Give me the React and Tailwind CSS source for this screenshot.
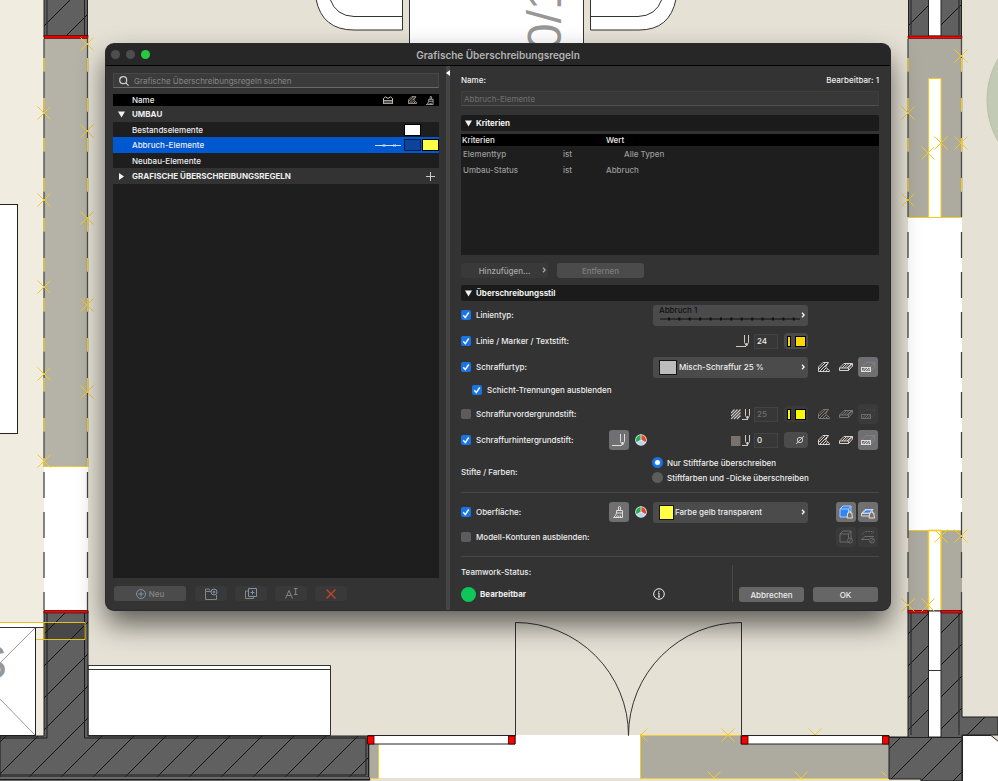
import React, { useState } from "react";

/* ---------- floor plan behind the dialog ---------- */

function Cross({ x, y }) {
  return (
    <path
      d={`M${x - 6.5} ${y - 6.5}L${x + 6.5} ${y + 6.5}M${x - 6.5} ${y + 6.5}L${x + 6.5} ${y - 6.5}`}
      stroke="#f2cb22"
      strokeWidth="1"
      fill="none"
    />
  );
}

function DemolitionEdge({ x, from, to }) {
  return (
    <g fill="none">
      <path d={`M${x} ${from}V${to}`} stroke="#4a4b48" strokeWidth="1.3" />
      <path d={`M${x} 58V${to}`} stroke="#b5b3a8" strokeWidth="1.6" strokeDasharray="14 26" />
      <path d={`M${x} 58V${to}`} stroke="#f0cb2a" strokeWidth="1.2" strokeDasharray="13 27" />
    </g>
  );
}

const crosses = [
  [44, 113], [44, 200], [44, 287], [44, 374], [44, 461],
  [87, 44], [87, 131], [87, 218], [87, 305], [87, 392],
  [961, 56], [961, 143], [941, 143], [928, 153], [908, 113], [908, 200],
  [941, 536], [961, 536], [908, 605], [928, 605],
];

function FloorPlan() {
  return (
    <svg
      className="absolute inset-0 h-full w-full"
      viewBox="0 0 998 781"
      preserveAspectRatio="xMidYMid slice"
      aria-hidden="true"
    >
      <defs>
        <pattern id="hatch" width="32" height="32" patternUnits="userSpaceOnUse" patternTransform="translate(6 0)">
          <rect width="32" height="32" fill="#606060" />
          <path d="M-1 33L33 -1" stroke="#161616" strokeWidth="1" />
        </pattern>
        <clipPath id="bottomEdge">
          <rect x="640" y="728" width="246" height="50" />
        </clipPath>
      </defs>
      <rect width="998" height="781" fill="#e5e1d5" />
      <rect width="44" height="781" fill="#f0ece0" />
      <circle cx="1069" cy="100" r="82" fill="#c2c9b5" stroke="#b7c0a8" />

      {/* furniture */}
      <rect x="-2" y="204.500" width="19.500" height="229" fill="#fff" stroke="#222" />
      <g fill="#fff" stroke="#333">
        <path d="M316 -1Q322 30 354 30H402.500V-1Z" />
        <path d="M330 -1Q336 16 354 16.500H402.500" fill="none" />
        <path d="M676 -1Q670 30 639 30H590.500V-1Z" />
        <path d="M662 -1Q656 16 638 16.500H590.500" fill="none" />
        <path d="M409.500 -1V70H583.500V-1Z" />
        <path d="M88 665.500H330.500V735.500H88ZM88 669.500H330.500" />
      </g>
      <text transform="translate(561 50) rotate(-90)" fontFamily="Liberation Sans, sans-serif" fontSize="48" fill="#979797">
        0/1
      </text>

      {/* left wall */}
      <rect x="44" y="0" width="44" height="36" fill="url(#hatch)" />
      <path d="M44 0V37M47 0V35M84.500 0V35M87.500 0V37" stroke="#222" />
      <rect x="44" y="38" width="44" height="429" fill="#b5b3a8" />
      <rect x="44" y="35.500" width="44" height="3" fill="#e60000" stroke="#400" strokeWidth="0.6" />
      <DemolitionEdge x={44} from={39} to={467} />
      <DemolitionEdge x={87.5} from={39} to={467} />
      <rect x="44" y="467" width="44" height="144" fill="#fff" />
      <path d="M44 472V610M87.500 472V610" stroke="#444" strokeWidth="1.3" strokeDasharray="26 14" />
      <path d="M44 466.500H88" stroke="#f0cb2a" />

      {/* lower left room */}
      <rect x="-1" y="623" width="45" height="5" fill="#fff" />
      <path d="M-1 627.500H35.500V735.500H-1Z" fill="#fff" stroke="#222" />
      <path d="M35 628L-1 664M-1 698L35 735" stroke="#999" />
      <text x="-25" y="679" fontFamily="Liberation Sans, sans-serif" fontSize="48" fill="#979797">S</text>
      <path d="M44 611H88V736H368.500V777H0V736H44Z" fill="url(#hatch)" stroke="#1c1c1c" />
      <path d="M47 611V738H0M84.500 611V738H366V775H0" fill="none" stroke="#1c1c1c" />
      <rect x="0" y="777" width="370" height="4" fill="#6a6a6a" />
      <path d="M0 779.500H370V737" stroke="#1c1c1c" fill="none" />
      <rect x="44" y="610.500" width="44" height="2.500" fill="#f00" stroke="#400" strokeWidth="0.6" />
      <rect x="44" y="623" width="41" height="16" fill="#000" opacity="0.25" />
      <path d="M0 622.500H85V639.500H36M44 622V639" fill="none" stroke="#e4c01f" />
      <path d="M0 627.500H44" stroke="#333" />

      {/* openings along the lower wall */}
      <rect x="370" y="744" width="8" height="34" fill="#adab9f" />
      <rect x="378" y="735" width="262" height="43" fill="#fff" />
      <rect x="640" y="735" width="249" height="43" fill="#adab9f" />
      <path d="M378.500 744V778.500M370 778.500H378M640.500 778V735.500H741M640 778.500H889" stroke="#f0cb2a" fill="none" />
      <g clipPath="url(#bottomEdge)">
        <Cross x={641} y={735} />
        <Cross x={728} y={735} />
        <Cross x={714} y={778} />
        <Cross x={801} y={778} />
        <Cross x={888} y={778} />
        <Cross x={815} y={735} />
      </g>
      <path d="M368 735.500H515V744H368ZM741 735.500H889V744H741Z" fill="#fff" stroke="#222" />
      <path d="M367.500 736H374V744H367.500ZM508.500 736H515V744H508.500ZM741.500 736H748V744H741.500ZM882.500 736H889V744H882.500Z" fill="#f00" stroke="#300" strokeWidth="0.8" />
      <path d="M515.500 736V622.500A113 113 0 0 1 628.500 735.500A113 113 0 0 1 741.500 622.500V736" fill="none" stroke="#333" />

      {/* right wall */}
      <path d="M908 0H962V36H908Z" fill="url(#hatch)" />
      <rect x="908" y="38" width="54" height="180" fill="#adab9f" />
      <rect x="908" y="218" width="54" height="312" fill="#fff" />
      <rect x="908" y="530" width="54" height="81" fill="#adab9f" />
      <path d="M928.500 217V78.500H941V217M908 217.500H962M908 530.500H962" fill="#fff" stroke="#f2cb22" />
      <path d="M928.500 611V530.500H941V611" fill="#fff" stroke="#f2cb22" strokeWidth="1.4" />
      <DemolitionEdge x={908} from={39} to={217} />
      <DemolitionEdge x={961.5} from={39} to={217} />
      <path d="M908 232V611M961.500 232V611" stroke="#444" strokeWidth="1.3" strokeDasharray="26 14" />
      <path d="M908 611H962V717H998V735H962V781H921V779H889V737H908Z" fill="url(#hatch)" stroke="#1c1c1c" />
      <path d="M911 612V735M959 612V735M911 0V35M959 0V35M908.500 0V36M961.500 0V36M889 737.500H962" stroke="#222" />
      <rect x="928.500" y="-1" width="12.500" height="37" fill="#fff" stroke="#222" />
      <rect x="928.500" y="611" width="12.500" height="126" fill="#fff" stroke="#222" />
      <path d="M928.500 670.500H941" stroke="#333" />
      <path d="M908 36H962V38.500H908ZM908 610.500H928V613H908ZM941 610.500H962V613H941Z" fill="#f00" stroke="#400" strokeWidth="0.6" />
      <path d="M962.500 735.500H991L999 742V782H962.500Z" fill="#fff" stroke="#222" />
      {crosses.map(([x, y]) => (
        <Cross key={`${x}-${y}`} x={x} y={y} />
      ))}
    </svg>
  );
}

/* ---------- icons ---------- */

const line = { fill: "none", stroke: "currentColor", strokeWidth: 1 };

function PenIcon() {
  return (
    <svg className="h-3 w-4 shrink-0" viewBox="0 0 16 12" {...line}>
      <path d="M1 11.500H11M9.500 0V7.500L11.500 11L13.500 7.500V0" />
      <path d="M11.500 8V11" strokeWidth="1.4" />
    </svg>
  );
}

function HatchPenIcon() {
  return (
    <svg className="h-3 w-5 shrink-0" viewBox="0 0 20 12" {...line}>
      <path d="M0 5L3.500 1.500M0 8L6.500 1.500M0 11L9.500 1.500M3 11L9.500 4.500M6 11L9.500 7.500" strokeWidth="1.1" />
      <path d="M11 11.500H17M14.500 1V7.500L16.500 11L18.500 7.500V1M16.500 8V11" />
    </svg>
  );
}

function FillPenIcon() {
  return (
    <svg className="h-3 w-5 shrink-0" viewBox="0 0 20 12" {...line}>
      <rect x="0" y="2" width="9.500" height="10" fill="#79716c" stroke="none" />
      <path d="M11 11.500H17M14.500 1V7.500L16.500 11L18.500 7.500V1M16.500 8V11" />
    </svg>
  );
}

function CutFillIcon({ className = "h-[10px] w-3 shrink-0" }) {
  return (
    <svg className={className} viewBox="0 0 12 10" {...line}>
      <path d="M.5 9.500V5L5 .5H10.500L7.500 5L11.500 8.500V9.500Z" />
      <path d="M1 7L7 1M1.500 9.500L9.500 1.500M4.500 9.500L8 6M7.500 9.500L9.500 7.500" />
    </svg>
  );
}

function CoverFillIcon() {
  return (
    <svg className="h-[10px] w-[14px] shrink-0" viewBox="0 0 14 10" {...line}>
      <path d="M.5 6L5 1.500H13.500L9.500 6ZM.5 6V8.500H9.500V6M9.500 8.500L13.500 4V1.500" />
      <path d="M3 6L7 2M5.500 6L9.500 2M8 6L12 2" />
    </svg>
  );
}

function SectionFillIcon() {
  return (
    <svg className="h-[10px] w-[14px] shrink-0" viewBox="0 0 14 10" {...line}>
      <path d="M.5 5L5 .5H13.500L9.500 5M10 9L13.500 5V.5" opacity="0.15" />
      <path d="M0 5.500H10M0 9.500H10M.5 5V10M9.500 5V10M1 9.500L4.500 6M3.500 9.500L7 6M6 9.500L9.500 6" />
    </svg>
  );
}

function BrushIcon({ className = "h-3 w-3" }) {
  return (
    <svg className={className} viewBox="0 0 12 12" {...line}>
      <path d="M5.500 4V1Q6.500 0 7.500 1V4M3.500 4.500H9.500V7H3.500Z" />
      <path d="M3.500 7Q3 10 .5 11.500H9.500V7M3 11.500L4.500 9.500M5.500 11.500L6 9.500M7.500 11.500V9.500" />
    </svg>
  );
}

function SkylineIcon() {
  return (
    <svg className="h-2 w-[10px]" viewBox="0 0 10 8" {...line}>
      <path d="M.5 4V2.500L2.500 .8L5 2.500L7.500 .8L9.500 2.500V4" />
      <path d="M0 4.500H10M0 7.500H10M.5 4V7.500M9.500 4V7.500M0 6H10" strokeWidth="0.8" />
    </svg>
  );
}

function Wheel() {
  return (
    <svg className="h-3 w-3 shrink-0" viewBox="0 0 12 12">
      <circle cx="6" cy="6" r="5.800" fill="#e9eef2" />
      <path d="M6 6V1A5 5 0 0 1 10.300 8.500Z" fill="#e8452c" />
      <path d="M6 6L10.300 8.500A5 5 0 0 1 1.700 8.500Z" fill="#b9d5f4" />
      <path d="M6 6L1.700 8.500A5 5 0 0 1 6 1Z" fill="#1fae55" />
      <path d="M6 6V.5M6 6L10.800 8.800M6 6L1.200 8.800" stroke="#fff" strokeWidth="0.7" />
    </svg>
  );
}

function CubeIcon({ active }) {
  return (
    <svg className="h-[14px] w-[14px]" viewBox="0 0 14 14" {...line}>
      <path d="M1 4L4 1H12V9L9.500 12H1Z" fill={active ? "#2f86f6" : "none"} stroke={active ? "#a9cdfb" : "currentColor"} />
      <path d="M1 4H9.500V12M9.500 4L12 1" stroke={active ? "#a9cdfb" : "currentColor"} />
      {active ? (
        <path d="M10 8V6.500Q10.500 5.500 11.500 6.500V8H13V10L13.500 13H8L8.500 10V8Z" fill="#77716e" stroke="#e6dfd9" />
      ) : (
        <path d="M8.500 10.500A2.500 2.500 0 1 0 13.500 10.500A2.500 2.500 0 1 0 8.500 10.500M9.500 12L12.500 9" fill="#3a3a3a" />
      )}
    </svg>
  );
}

function PlateIcon({ active }) {
  return (
    <svg className="h-[14px] w-[14px]" viewBox="0 0 14 14" {...line}>
      {active ? (
        <>
          <path d="M.5 8.500L4 4.500H12L9 8.500ZM.5 8.500V11H8" />
          <path d="M2 8L5 5H11L9 8Z" fill="#2f86f6" stroke="#a9cdfb" />
          <path d="M10 8V6.500Q10.500 5.500 11.500 6.500V8H13V10L13.500 13H8L8.500 10V8Z" fill="#77716e" stroke="#e6dfd9" />
        </>
      ) : (
        <>
          <path d="M1 4.500L4 1.500H13L10 4.500" strokeDasharray="1.500 1" />
          <path d="M.5 9.500L4 6.500H13M.5 9.500H8" />
          <path d="M8.500 10.500A2.500 2.500 0 1 0 13.500 10.500A2.500 2.500 0 1 0 8.500 10.500M9.500 12L12.500 9" fill="#3a3a3a" />
        </>
      )}
    </svg>
  );
}

function Chevron({ className }) {
  return (
    <svg className={className} viewBox="0 0 4 6" fill="none" stroke="currentColor" strokeWidth="1.3">
      <path d="M1 .8L3.200 3L1 5.200" />
    </svg>
  );
}

function Triangle({ open }) {
  return (
    <svg className="h-[7px] w-[7px] shrink-0" viewBox="0 0 7 7" fill="#f2f2f2">
      <path d={open ? "M0 .5H7L3.500 6.500Z" : "M1 0V7L6 3.500Z"} />
    </svg>
  );
}

/* ---------- controls ---------- */

function Check({ label, defaultChecked = false, indent = false }) {
  return (
    <label className={`flex min-w-0 flex-1 items-center gap-[5px] whitespace-nowrap ${indent ? "pl-[11px]" : ""}`}>
      <span className="relative h-[10px] w-[10px] shrink-0">
        <input
          type="checkbox"
          defaultChecked={defaultChecked}
          className="peer block h-[10px] w-[10px] appearance-none rounded-[2px] bg-[#5c5c5c] checked:bg-[#1a74e6]"
        />
        <svg
          className="pointer-events-none absolute inset-0 hidden h-[10px] w-[10px] peer-checked:block"
          viewBox="0 0 10 10"
          fill="none"
          stroke="#fff"
          strokeWidth="1.4"
        >
          <path d="M2.300 5.300L4.300 7.600L7.700 2.500" />
        </svg>
      </span>
      {label}
    </label>
  );
}

function Row({ label, aux, control, tools, tall = true }) {
  return (
    <div className={`flex items-center ${tall ? "h-[26px]" : "h-6"}`}>
      {label}
      <div className="flex w-11 shrink-0 items-center gap-[6px]">{aux}</div>
      <div className="flex w-[155px] shrink-0 items-center justify-end">{control}</div>
      <div className="flex w-[71px] shrink-0 items-center justify-end gap-[2px] pr-px">{tools}</div>
    </div>
  );
}

function Tool({ label, pressed = false, disabled = false, framed = false, children }) {
  const look = pressed
    ? "bg-[#707073] text-[#e3dcd6]"
    : disabled
      ? framed
        ? "bg-[#3a3a3a] text-[#6b6b6b]"
        : "text-[#7a7673]"
      : "text-[#d8d0ca]";
  return (
    <button
      type="button"
      aria-label={label}
      aria-pressed={pressed}
      disabled={disabled}
      className={`flex h-5 w-5 shrink-0 items-center justify-center rounded-[3px] ${look}`}
    >
      {children}
    </button>
  );
}

function FillTools({ disabled = false }) {
  return (
    <>
      <Tool label="Schnittschraffuren" disabled={disabled}><CutFillIcon /></Tool>
      <Tool label="Deckschraffuren" disabled={disabled}><CoverFillIcon /></Tool>
      <Tool label="Zeichenschraffuren" disabled={disabled} framed pressed={!disabled}><SectionFillIcon /></Tool>
    </>
  );
}

function Picker({ label, value, pad, children }) {
  return (
    <div className="relative w-full">
      <select
        aria-label={label}
        className={`block h-[21px] w-full appearance-none rounded-[3px] bg-[#4b4b4b] pr-4 ${pad}`}
      >
        <option>{value}</option>
      </select>
      {children}
      <Chevron className="pointer-events-none absolute top-[7px] right-[3px] h-[6px] w-1 text-white" />
    </div>
  );
}

function PenNumber({ icon, label, value, disabled = false, children }) {
  return (
    <div className="flex items-center text-[#d0c8c2]">
      {icon}
      <input
        aria-label={label}
        defaultValue={value}
        disabled={disabled}
        className={`mr-[6px] ml-[3px] h-[15px] w-6 border border-[#434343] bg-[#373737] px-[2px] ${disabled ? "text-[#707070]" : "text-[#eeeeee]"}`}
      />
      <button
        type="button"
        aria-label={`${label} wählen`}
        disabled={disabled}
        className={`flex h-4 w-6 items-center justify-end gap-1 rounded-[4px] pr-[2px] ${disabled ? "bg-[#3a3a3a]" : "bg-[#4b4b4b]"}`}
      >
        {children}
      </button>
    </div>
  );
}

function PenSwatch({ bright }) {
  const fill = bright ? "bg-[#f9f900]" : "bg-[#ffd800]";
  return (
    <>
      <span className={`h-[11px] w-1 border border-black ${fill}`} />
      <span className={`h-[11px] w-[11px] border border-black ${fill}`} />
    </>
  );
}

function SectionHeader({ children }) {
  return (
    <h2 className="flex h-4 items-center gap-1 rounded-[2px] bg-[#1b1b1b] pl-1 font-bold text-[#f2f2f2]">
      <Triangle open />
      {children}
    </h2>
  );
}

/* ---------- left: rule list ---------- */

function FooterButton({ label, tone = "text-[#858585]", children }) {
  return (
    <button type="button" aria-label={label} className={`flex h-[15px] w-8 items-center justify-center rounded-[3px] bg-[#393939] ${tone}`}>
      {children}
    </button>
  );
}

function RuleList() {
  const [query, setQuery] = useState("");
  return (
    <section className="flex w-[340px] shrink-0 flex-col pt-[7px] pr-[7px] pb-[9px] pl-[7px]">
      <label className="mb-[6px] flex h-[15px] items-center gap-[5px] border border-[#484848] border-b-[#6a6a6a] bg-[#3b3b3b] px-[5px]">
        <svg className="h-[10px] w-[10px] shrink-0" viewBox="0 0 10 10" fill="none" stroke="#cfcfcf" strokeWidth="1.2">
          <circle cx="4.200" cy="4.200" r="3.500" />
          <path d="M6.800 6.800L9.600 9.600" />
        </svg>
        <input
          type="text"
          aria-label="Grafische Überschreibungsregeln suchen"
          placeholder="Grafische Überschreibungsregeln suchen"
          value={query}
          onChange={(e) => setQuery(e.target.value)}
          className="min-w-0 flex-1 bg-transparent font-normal outline-none placeholder:text-[#858585]"
        />
      </label>
      <div className="flex-1 bg-[#1e1e1e]">
        <table className="w-full table-fixed border-collapse text-left">
          <colgroup>
            <col className="w-[19px]" />
            <col />
            <col className="w-[30px]" />
            <col className="w-[18px]" />
            <col className="w-[18px]" />
          </colgroup>
          <thead>
            <tr className="h-3 bg-black">
              <th aria-label="Gruppe" className="p-0" />
              <th className="p-0 font-medium">Name</th>
              <th aria-label="Linie" className="p-0 text-[#d0c8c2]"><span className="flex justify-center"><SkylineIcon /></span></th>
              <th aria-label="Schraffur" className="p-0 text-[#d0c8c2]"><span className="flex justify-center"><CutFillIcon className="h-2 w-[9px]" /></span></th>
              <th aria-label="Oberfläche" className="p-0 text-[#d0c8c2]"><span className="flex justify-center"><BrushIcon className="h-[9px] w-[9px]" /></span></th>
            </tr>
          </thead>
          <tbody>
            <tr className="h-4 bg-[#333333] font-bold">
              <td className="p-0 pl-[5px]"><Triangle open /></td>
              <td colSpan={4} className="p-0">UMBAU</td>
            </tr>
            <tr className="h-[15px]">
              <td className="p-0" />
              <td className="p-0" colSpan={2}>Bestandselemente</td>
              <td className="p-0"><span className="mx-auto block h-3 w-[17px] border border-black bg-white" /></td>
              <td className="p-0" />
            </tr>
            <tr className="h-4 bg-[#0058d0]">
              <td className="p-0" />
              <td className="p-0">Abbruch-Elemente</td>
              <td className="p-0">
                <svg className="mx-auto h-[5px] w-[26px]" viewBox="0 0 26 5" fill="none" stroke="#cfe2fb">
                  <path d="M0 2.500H26" />
                  <path d="M8 1.200L10 3.800M8 3.800L10 1.200M18.500 1.200L20.500 3.800M18.500 3.800L20.500 1.200" strokeWidth="0.8" />
                </svg>
              </td>
              <td className="p-0"><span className="mx-auto block h-3 w-[17px] border border-[#001c4a] bg-[#0b4499]" /></td>
              <td className="p-0"><span className="mx-auto block h-3 w-[17px] border border-black bg-[#ffff45]" /></td>
            </tr>
            <tr className="h-[15px]">
              <td className="p-0" />
              <td className="p-0" colSpan={4}>Neubau-Elemente</td>
            </tr>
            <tr className="h-4 bg-[#333333] font-bold">
              <td className="p-0 pl-[5px]"><Triangle /></td>
              <td className="p-0" colSpan={3}>GRAFISCHE ÜBERSCHREIBUNGSREGELN</td>
              <td className="p-0">
                <button type="button" aria-label="Regel hinzufügen" className="mx-auto block">
                  <svg className="h-[9px] w-[9px]" viewBox="0 0 9 9" stroke="#d0c8c2"><path d="M4.500 0V9M0 4.500H9" /></svg>
                </button>
              </td>
            </tr>
          </tbody>
        </table>
      </div>
      <div className="mt-2 flex gap-2 pl-px">
        <button type="button" className="mr-px flex h-[15px] w-[72px] items-center justify-center gap-[3px] rounded-[3px] bg-[#4b4b4b] text-[#858585]">
          <svg className="h-[10px] w-[10px]" viewBox="0 0 10 10" fill="none" stroke="#7f93ab"><circle cx="5" cy="5" r="4.500" /><path d="M5 2.500V7.500M2.500 5H7.500" /></svg>
          Neu
        </button>
        <FooterButton label="Neuer Ordner">
          <svg className="h-3 w-[13px]" viewBox="0 0 13 12" {...line}>
            <path d="M6 3.500H.5V11.500H11.500V7M.5 3.500V1H4L5 2.500" />
            <circle cx="9" cy="4" r="3" stroke="#7f93ab" />
            <path d="M9 2.500V5.500M7.500 4H10.500" stroke="#7f93ab" />
          </svg>
        </FooterButton>
        <FooterButton label="Duplizieren">
          <svg className="h-[11px] w-3" viewBox="0 0 12 11" {...line}>
            <path d="M3 3H.5V10.500H8.500V8.500" />
            <path d="M3.500 .5H11.500V8.500H3.500ZM7.500 2.500V6.500M5.500 4.500H9.500" stroke="#7f93ab" />
          </svg>
        </FooterButton>
        <FooterButton label="Umbenennen">
          <svg className="h-[11px] w-[13px]" viewBox="0 0 13 11" {...line}>
            <path d="M.5 10.500L4 2.500L7.500 10.500M1.800 7.500H6.200M9 .5H12.500M9 6.500H12.500M10.700 .5V6.500" />
          </svg>
        </FooterButton>
        <FooterButton label="Löschen" tone="text-[#c8432b]">
          <svg className="h-[10px] w-[10px]" viewBox="0 0 10 10" fill="none" stroke="currentColor" strokeWidth="1.300"><path d="M.5 .5L9.500 9.500M9.500 .5L.5 9.500" /></svg>
        </FooterButton>
      </div>
    </section>
  );
}

/* ---------- right: rule settings ---------- */

function Criteria() {
  return (
    <>
      <div className="mt-[3px] h-[121px] bg-[#1e1e1e]">
        <table className="w-full table-fixed border-collapse text-left">
          <colgroup>
            <col className="w-[101px]" />
            <col className="w-[43px]" />
            <col />
          </colgroup>
          <thead>
            <tr className="h-3 bg-black">
              <th className="p-0 pl-px font-medium">Kriterien</th>
              <th aria-label="Operator" className="p-0" />
              <th className="p-0 pl-px font-medium">Wert</th>
            </tr>
          </thead>
          <tbody className="text-[#9b9b9b]">
            <tr className="h-4">
              <td className="p-0 pl-[2px]">Elementtyp</td>
              <td className="p-0 pl-px">ist</td>
              <td className="p-0 pl-[19px]">Alle Typen</td>
            </tr>
            <tr className="h-[15px]">
              <td className="p-0 pl-[2px]">Umbau-Status</td>
              <td className="p-0 pl-px">ist</td>
              <td className="p-0 pl-px">Abbruch</td>
            </tr>
          </tbody>
        </table>
      </div>
      <div className="mt-2 mb-[7px] flex gap-[9px]">
        <button type="button" className="relative h-[15px] w-[87px] rounded-[3px] bg-[#393939] text-[#a8a8a8]">
          Hinzufügen...
          <Chevron className="absolute top-1 right-[2px] h-[6px] w-1" />
        </button>
        <button type="button" disabled className="h-[15px] w-[87px] rounded-[3px] bg-[#4b4b4b] text-[#7e7e7e]">Entfernen</button>
      </div>
    </>
  );
}

function PenMode() {
  return (
    <div role="radiogroup" aria-labelledby="penModeLabel" className="flex items-center pt-[2px] pb-[7px]">
      <span id="penModeLabel" className="min-w-0 flex-1 pt-1">Stifte / Farben:</span>
      <div className="w-[227px]">
        {["Nur Stiftfarbe überschreiben", "Stiftfarben und -Dicke überschreiben"].map((text, i) => (
          <label key={text} className="flex h-[15px] items-center gap-1 whitespace-nowrap">
            <input
              type="radio"
              name="penMode"
              defaultChecked={i === 0}
              className="h-[11px] w-[11px] appearance-none rounded-full bg-[#5c5c5c] checked:border-[3px] checked:border-[#1a74e6] checked:bg-white"
            />
            {text}
          </label>
        ))}
      </div>
    </div>
  );
}

function Settings() {
  return (
    <section className="min-w-0 flex-1 pt-2 pr-[11px] pb-2 pl-[11px]">
      <div className="flex h-3 items-center justify-between">
        <label htmlFor="ruleName">Name:</label>
        <span>Bearbeitbar: 1</span>
      </div>
      <input
        id="ruleName"
        disabled
        defaultValue="Abbruch-Elemente"
        className="mt-[5px] mb-[9px] block h-[15px] w-full border border-[#3f3f3f] border-b-[#505050] bg-[#383838] px-[2px] font-normal text-[#707070]"
      />
      <SectionHeader>Kriterien</SectionHeader>
      <Criteria />
      <SectionHeader>Überschreibungsstil</SectionHeader>
      <div className="pt-px">
        <Row
          label={<Check label="Linientyp:" defaultChecked />}
          control={
            <Picker label="Linientyp" value="Abbruch 1" pad="pb-[10px] pl-[6px] text-[#101010]">
              <svg className="pointer-events-none absolute bottom-[5px] left-[7px] h-1 w-[140px]" viewBox="0 0 140 4">
                <path d="M0 2H140" stroke="#111" />
                <path d="M8 2H136" stroke="#111" strokeWidth="3" strokeDasharray="2 8.400" />
              </svg>
            </Picker>
          }
        />
        <Row
          label={<Check label="Linie / Marker / Textstift:" defaultChecked />}
          control={<PenNumber icon={<PenIcon />} label="Linienstift" value="24"><PenSwatch /></PenNumber>}
        />
        <Row
          label={<Check label="Schraffurtyp:" defaultChecked />}
          control={
            <Picker label="Schraffurtyp" value="Misch-Schraffur 25 %" pad="pl-[26px]">
              <span className="pointer-events-none absolute top-[3px] left-[6px] h-[15px] w-[18px] border border-[#161616] bg-[#bdbdbd]" />
            </Picker>
          }
          tools={<FillTools />}
        />
        <div className="mb-px flex h-5 items-center">
          <Check label="Schicht-Trennungen ausblenden" defaultChecked indent />
        </div>
        <Row
          label={<Check label="Schraffurvordergrundstift:" />}
          control={<PenNumber icon={<HatchPenIcon />} label="Vordergrundstift" value="25" disabled><PenSwatch bright /></PenNumber>}
          tools={<FillTools disabled />}
        />
        <Row
          label={<Check label="Schraffurhintergrundstift:" defaultChecked />}
          aux={<><Tool label="Stiftauswahl" pressed><PenIcon /></Tool><Wheel /></>}
          control={
            <PenNumber icon={<FillPenIcon />} label="Hintergrundstift" value="0">
              <svg className="mr-[2px] h-2 w-2" viewBox="0 0 8 8" {...line}><circle cx="4" cy="4" r="2.700" /><path d="M0 8L8 0" /></svg>
            </PenNumber>
          }
          tools={<FillTools />}
        />
        <PenMode />
      </div>
      <div className="border-t border-[#484848] pt-[6px] pb-[7px]">
        <Row
          label={<Check label="Oberfläche:" defaultChecked />}
          aux={<><Tool label="Oberflächenauswahl" pressed><BrushIcon /></Tool><Wheel /></>}
          control={
            <Picker label="Oberfläche" value="Farbe gelb transparent" pad="pl-[22px]">
              <span className="pointer-events-none absolute top-[3px] left-[6px] h-[15px] w-[15px] border border-[#161616] bg-[#ffff45]" />
            </Picker>
          }
          tools={<><Tool label="3D-Flächen" pressed><CubeIcon active /></Tool><Tool label="Deckflächen" pressed><PlateIcon active /></Tool></>}
        />
        <Row
          tall={false}
          label={<Check label="Modell-Konturen ausblenden:" />}
          tools={<><Tool label="3D-Konturen" disabled framed><CubeIcon /></Tool><Tool label="Deckkonturen" disabled framed><PlateIcon /></Tool></>}
        />
      </div>
      <footer className="flex items-end border-t border-[#484848] pt-2">
        <div className="flex-1">
          <p className="flex h-[14px] items-center">Teamwork-Status:</p>
          <p className="mt-[7px] flex h-4 items-center gap-1 font-bold">
            <span className="h-[15px] w-[15px] rounded-full bg-[#0fc65a]" />
            Bearbeitbar
          </p>
        </div>
        <button type="button" aria-label="Info" className="mr-[67px] mb-[2px] text-[#eeeeee]">
          <svg className="h-3 w-3" viewBox="0 0 12 12" {...line}><circle cx="6" cy="6" r="5.300" /><path d="M6 5V9M6 2.800V4M5 5H6M5 9H7" /></svg>
        </button>
        <div className="flex h-[37px] items-end gap-[9px] border-l border-[#484848] pr-px pl-[6px]">
          <button type="button" className="h-[15px] w-[65px] rounded-[3px] bg-[#666666]">Abbrechen</button>
          <button type="button" className="h-[15px] w-[65px] rounded-[3px] bg-[#666666]">OK</button>
        </div>
      </footer>
    </section>
  );
}

export default function App() {
  return (
    <main className="relative min-h-screen overflow-hidden pt-11 pr-[108px] pb-40 pl-[106px] font-['Inter','Liberation_Sans',sans-serif]">
      <FloorPlan />
      <div
        role="dialog"
        aria-labelledby="dialogTitle"
        className="relative overflow-hidden rounded-[8px] bg-[#333333] text-[8px] leading-[10px] font-medium text-[#eeeeee] shadow-[0_0_0_1px_#2b2b2b,0_14px_28px_rgba(0,0,0,0.6)]"
      >
        <header className="relative flex h-[22px] items-center justify-center border-b border-black bg-[#272727]">
          <div className="absolute left-[5px] flex gap-[6px]">
            <button type="button" aria-label="Schließen" className="h-[9px] w-[9px] rounded-full bg-[#4e4e4e]" />
            <button type="button" aria-label="Minimieren" className="h-[9px] w-[9px] rounded-full bg-[#4e4e4e]" />
            <button type="button" aria-label="Vollbild" className="h-[9px] w-[9px] rounded-full bg-[#28c840]" />
          </div>
          <h1 id="dialogTitle" className="text-[10px] font-semibold text-[#b4b4b4]">Grafische Überschreibungsregeln</h1>
        </header>
        <div className="flex">
          <RuleList />
          <div className="w-1 shrink-0 bg-[#464646] pt-1">
            <svg className="h-[6px] w-1" viewBox="0 0 4 6" fill="#fff"><path d="M4 0V6L0 3Z" /></svg>
          </div>
          <Settings />
        </div>
      </div>
    </main>
  );
}
